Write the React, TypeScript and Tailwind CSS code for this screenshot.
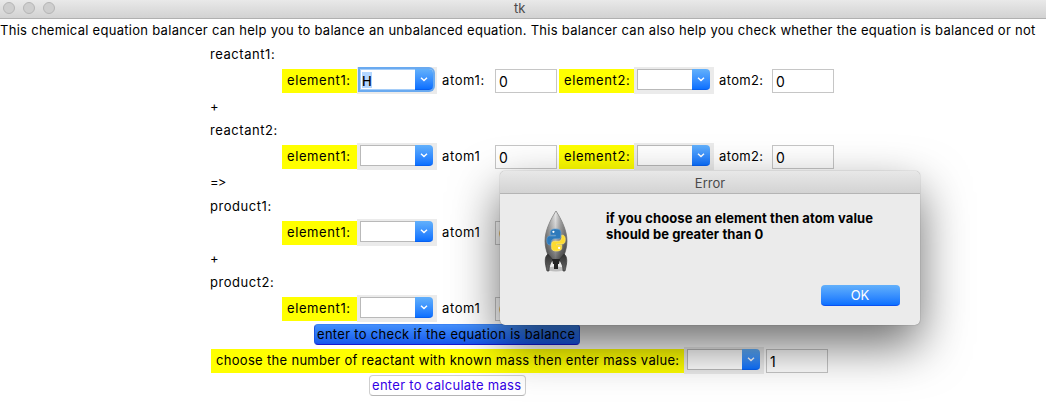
import React from "react";

function Combo({ value, focused }: { value?: string; focused?: boolean }) {
  return (
    <div className="h-[27px] w-20 shrink-0 bg-[#ebebeb] pt-[2px] pl-[3px]">
      <div className={`flex h-[21px] w-[73px] rounded-r-[4px] ${focused ? "ring-2 ring-[#6aaaf0]" : ""}`}>
        <div className={`w-[55px] border border-r-0 bg-white pt-[2px] ${focused ? "border-[#a5cdf8]" : "border-[#b9b9b9]"}`}>
          {value && <span className="ml-[1px] block h-4 w-[10px] bg-[#b3d7ff] font-medium leading-[18px]">{value}</span>}
        </div>
        <div className="flex w-[18px] items-center justify-center rounded-r-[4px] border-b border-[#0860f0] bg-linear-to-b from-[#62b0fb] to-[#0a70ff] pt-px">
          <svg width="8" height="5" viewBox="0 0 8 5" fill="none" stroke="white" strokeWidth="1.4">
            <path d="M1 .8 4 3.6 7 .8" />
          </svg>
        </div>
      </div>
    </div>
  );
}

function Entry({ value }: { value: string }) {
  return (
    <div className="mx-[2px] h-6 w-[62px] shrink-0 border border-[#c6c6c6] bg-white pl-[3px] text-[14px] leading-[23px]">{value}</div>
  );
}

function Tag({ children }: { children: React.ReactNode }) {
  return <div className="h-6 w-[75px] shrink-0 bg-[#ffff00] pl-[5px] leading-[23px] tracking-[0.6px]">{children}</div>;
}

function Fields({ atom, focused, single }: { atom: string; focused?: boolean; single?: boolean }) {
  return (
    <div className="flex h-7 items-start pt-px pl-[282px]">
      <div className="flex pt-[2px]">
        <Tag>element1:</Tag>
      </div>
      <Combo value={focused ? "H" : undefined} focused={focused} />
      <div className="w-14 shrink-0 pt-[5px] pl-[5px] tracking-[0.6px]">{atom}</div>
      <div className="pt-[2px]">
        <Entry value="0" />
      </div>
      {!single && (
        <>
          <div className="pt-[2px]">
            <Tag>element2:</Tag>
          </div>
          <Combo />
          <div className="w-14 shrink-0 pt-[5px] pl-[5px] tracking-[0.35px]">atom2:</div>
          <div className="pt-[2px]">
            <Entry value="0" />
          </div>
        </>
      )}
    </div>
  );
}

function Line({ children }: { children: React.ReactNode }) {
  return <div className="h-6 pl-[210px] leading-[25px] tracking-[0.55px]">{children}</div>;
}

function Rocket() {
  return (
    <svg width="28" height="64" viewBox="0 0 28 64">
      <defs>
        <linearGradient id="hull" x1="0" x2="1" y1="0" y2="0">
          <stop offset="0" stopColor="#555" />
          <stop offset=".3" stopColor="#aaa" />
          <stop offset=".48" stopColor="#ddd" />
          <stop offset=".7" stopColor="#888" />
          <stop offset="1" stopColor="#3c3c3c" />
        </linearGradient>
        <linearGradient id="shade" x1="0" x2="0" y1="0" y2="1">
          <stop offset="0" stopColor="#fff" stopOpacity=".25" />
          <stop offset="1" stopColor="#222" stopOpacity=".6" />
        </linearGradient>
        <linearGradient id="fin" x1="0" x2="0" y1="0" y2="1">
          <stop offset="0" stopColor="#303030" />
          <stop offset="1" stopColor="#686868" />
        </linearGradient>
      </defs>
      <ellipse cx="14" cy="59" rx="9" ry="2.5" fill="#aaa" opacity=".7" />
      <path d="M14 1C9 9 3 20 3 31c0 6 2 13 5 19h12c3-6 5-13 5-19C25 20 19 9 14 1z" fill="url(#hull)" stroke="#666" strokeWidth=".7" />
      <path d="M14 1C9 9 3 20 3 31c0 6 2 13 5 19h12c3-6 5-13 5-19C25 20 19 9 14 1z" fill="url(#shade)" />
      <path d="M6 44c-4 3-3 9-1 17h2c0-6 2-9 4-11zM22 44c4 3 3 9 1 17h-2c0-6-2-9-4-11z" fill="url(#fin)" stroke="#333" strokeWidth=".7" />
      <path d="M10 49h8l-1 5h-1v5h-4v-5h-1z" fill="#242424" />
      <g transform="translate(4.8 19) scale(.88)">
        <path d="M10 0C5 0 4 2 4 4v3h6v1H3C1 8 0 10 0 13s1 5 3 5h2v-3c0-2 2-4 4-4h4c2 0 3-1 3-3V4c0-3-2-4-6-4z" fill="#2e7abb" stroke="#5c9bd0" strokeWidth=".8" />
        <path d="M11 25c5 0 6-2 6-4v-3h-6v-1h7c2 0 3-2 3-5s-1-5-3-5h-1v3c0 2-2 4-4 4H8.500c-2 0-3 1-3 3v4c0 3 1.500 4 5.500 4z" fill="#fddb30" stroke="#ffe875" strokeWidth=".8" />
        <circle cx="7.500" cy="3.200" r="1.300" fill="white" />
        <circle cx="14" cy="21.600" r="1.300" fill="white" />
      </g>
    </svg>
  );
}

export default function App() {
  return (
    <div className="relative h-[412px] w-[1046px] overflow-hidden bg-white font-['Inter',sans-serif] text-[13px] leading-4 whitespace-nowrap text-black">
      <div className="flex h-[19px] items-center border-b border-[#b0b0b0] bg-linear-to-b from-[#e9e9e9] to-[#d2d2d2] pb-[2px] pl-[3px]">
        <div className="flex w-[511px] gap-2">
          <div className="size-3 rounded-full border border-[#b5b5b5] bg-[#cecece]" />
          <div className="size-3 rounded-full border border-[#b5b5b5] bg-[#cecece]" />
          <div className="size-3 rounded-full border border-[#b5b5b5] bg-[#cecece]" />
        </div>
        <span className="text-[#4a4a4a]">tk</span>
      </div>
      <div className="h-[23px] leading-[23px] tracking-[0.285px]">
        This chemical equation balancer can help you to balance an unbalanced equation. This balancer can also help you check whether the equation is balanced or not
      </div>
      <Line>reactant1:</Line>
      <Fields atom="atom1:" focused />
      <Line>+</Line>
      <Line>reactant2:</Line>
      <Fields atom="atom1" />
      <Line>
        <span className="tracking-[-0.8px]">=&gt;</span>
      </Line>
      <Line>product1:</Line>
      <Fields atom="atom1" single />
      <Line>+</Line>
      <Line>product2:</Line>
      <Fields atom="atom1" single />
      <button className="mt-[2px] ml-[314px] block h-[21px] w-[266px] rounded-[4px] border border-t-[#3b83f5] border-r-[#1b55e0] border-b-[#1717d2] border-l-[#1b55e0] bg-linear-to-b from-[#438ffb] to-[#1757ed] pl-[2px] text-left leading-[19px] tracking-[0.3px]">
        enter to check if the equation is balance
      </button>
      <div className="flex h-[30px] items-start pt-[2px] pl-[211px]">
        <div className="mt-[2px] h-6 w-[473px] bg-[#ffff00] pl-[5px] leading-[23px] tracking-[0.31px]">
          choose the number of reactant with known mass then enter mass value:
        </div>
        <Combo />
        <div className="pt-[2px]">
          <Entry value="1" />
        </div>
      </div>
      <button className="ml-[369px] block h-[21px] w-[157px] rounded-[4px] border border-[#cfcfcf] border-b-[#b5b5b5] bg-white pl-[2px] text-left leading-[19px] tracking-[0.3px] text-[#3300e6]">
        enter to calculate mass
      </button>

      <div className="absolute top-[171px] left-[500px] h-[154px] w-[420px] rounded-[5px] bg-[#ebebeb] shadow-[0_0_1px_rgba(0,0,0,0.55),0_20px_48px_rgba(0,0,0,0.58)]">
        <div className="h-[23px] rounded-t-[5px] border-b border-[#b4b4b4] bg-linear-to-b from-[#e8e8e8] to-[#d3d3d3] text-center leading-[25px] text-[#4a4a4a]">
          Error
        </div>
        <div className="flex pt-[16px] pl-[42px]">
          <Rocket />
          <p className="ml-9 text-[13px] leading-4 font-bold tracking-[0.1px]">
            if you choose an element then atom value
            <br />
            should be greater than 0
          </p>
        </div>
        <button className="mt-[11px] ml-[321px] block h-[21px] w-[79px] rounded-[4px] border-b border-[#0a50f0] bg-linear-to-b from-[#62b0fb] to-[#0a70ff] pr-px leading-[21px] text-white">
          OK
        </button>
      </div>
    </div>
  );
}
